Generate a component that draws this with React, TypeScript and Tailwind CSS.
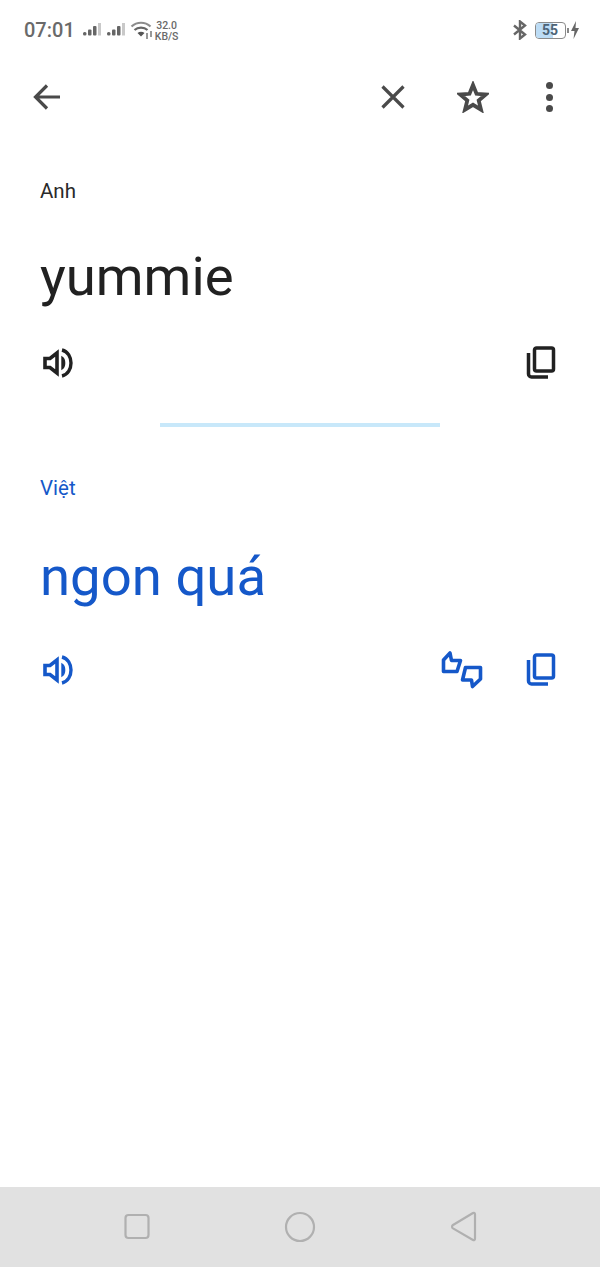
import React from "react";

const font = { fontFamily: 'Roboto, sans-serif' };

const SignalIcon = () => (
  <svg width="20" height="16" viewBox="0 0 20 16">
    <rect x="1" y="10" width="3.500" height="3.500" rx="1.500" fill="#666" />
    <rect x="6" y="7.500" width="3.500" height="6" rx="1" fill="#666" />
    <rect x="11" y="4" width="3.500" height="9.500" rx="1" fill="#666" />
    <rect x="16" y="1" width="3" height="12.500" fill="#c9c9c9" />
  </svg>
);

const WifiIcon = () => (
  <svg width="24" height="20" viewBox="0 0 24 20" fill="none">
    <path d="M1.500 6.500C7 1.500 15 1.500 20.500 6.500" stroke="#8c8c8c" strokeWidth="2.200" />
    <path d="M4.500 10C8 6.800 14 6.800 17.500 10" stroke="#666" strokeWidth="2.200" />
    <path d="M7.500 13C9.500 11.400 12.500 11.400 14.500 13L11 16.500Z" fill="#555" />
    <path d="M17 13v6M21 11v6" stroke="#777" strokeWidth="1.500" />
  </svg>
);

const SpeakerIcon = ({ color }: { color: string }) => (
  <svg width="36" height="32" viewBox="0 0 36 32" fill="none" stroke={color}>
    <path d="M5 11.500H10L17 6V26L10 20.500H5Z" strokeWidth="3.600" />
    <path d="M22 10c3.500 2 3.500 10 0 12Z" fill={color} strokeWidth="1.400" />
    <path d="M22 3c12 3 12 23 0 26" strokeWidth="3.400" />
  </svg>
);

const CopyIcon = ({ color }: { color: string }) => (
  <svg width="30" height="34" viewBox="0 0 30 34" fill="none" stroke={color} strokeWidth="3.500">
    <rect x="8.500" y="2" width="19" height="23" rx="2" />
    <path d="M2.500 7v21a3 3 0 0 0 3 3H22" />
  </svg>
);

const ThumbsIcon = () => (
  <svg width="42" height="40" viewBox="0 0 42 40" fill="none" stroke="#1558c9" strokeWidth="3.600" strokeLinejoin="round">
    <path d="M2.500 10L9 3L10.500 10.500H19.500L16 21.500H2.500Z" />
    <path d="M24.500 17.500H39.500V29L31.500 36.500L30.500 30H21.500Z" />
  </svg>
);

export default function App() {
  return (
    <div className="w-[600px] h-[1267px] flex flex-col bg-white overflow-hidden" style={font}>
      <div className="h-[60px] flex items-center justify-between pl-[24px] pr-[21px] shrink-0">
        <div className="flex items-center">
          <span className="text-[20px] leading-none font-medium text-[#6a6a6a]">07:01</span>
          <div className="ml-[7px]"><SignalIcon /></div>
          <div className="ml-[4px]"><SignalIcon /></div>
          <div className="ml-[4px] mt-[-1px]"><WifiIcon /></div>
          <div className="ml-[1px] mt-[2px] flex flex-col text-[10.500px] leading-[11px] font-medium text-[#6a6a6a] text-center">
            <span>32.0</span>
            <span>KB/S</span>
          </div>
        </div>
        <div className="flex items-center gap-[7px]">
          <svg width="16" height="20" viewBox="0 0 16 20" fill="none" stroke="#666" strokeWidth="2.400">
            <path d="M2 5.500L13 14.500L8 18.500V1.500L13 5.500L2 14.500" />
          </svg>
          <div className="flex items-center gap-[1px]">
            <div className="w-[31px] h-[17px] rounded-[4px] border border-[#8a8a8a] overflow-hidden flex">
              <div className="w-[17px] bg-[#bcdcf5] shrink-0" />
              <span className="ml-[-11px] text-[14px] leading-[15px] font-bold text-[#4d6478]">55</span>
            </div>
            <div className="w-[2px] h-[5px] bg-[#888]" />
            <svg width="8" height="18" viewBox="0 0 8 18" className="ml-[1px]">
              <path d="M5 0L0 10H3.500L2.500 18L8 7H4.500Z" fill="#666" />
            </svg>
          </div>
        </div>
      </div>

      <div className="h-[74px] flex items-center justify-between pl-[32px] pr-[47px] shrink-0">
        <svg width="30" height="28" viewBox="0 0 30 28" fill="none" stroke="#4a4a4a" strokeWidth="3.200">
          <path d="M28 14H4M15 2.500L3.500 14L15 25.500" />
        </svg>
        <div className="flex items-center">
          <svg width="26" height="26" viewBox="0 0 26 26" fill="none" stroke="#4a4a4a" strokeWidth="3.200">
            <path d="M2.500 2.500L23.500 23.500M23.500 2.500L2.500 23.500" />
          </svg>
          <svg width="32" height="32" viewBox="0 0 32 32" fill="none" stroke="#4a4a4a" strokeWidth="3.800" className="ml-[51px]">
            <path d="M16 4l3.500 8.800 9.300.700-7.100 6 2.300 9.200L16 23.800l-8 4.900 2.300-9.200-7.100-6 9.300-.700Z" />
          </svg>
          <div className="ml-[57px] flex flex-col gap-[4.500px]">
            <div className="w-[7px] h-[7px] rounded-full bg-[#4a4a4a]" />
            <div className="w-[7px] h-[7px] rounded-full bg-[#4a4a4a]" />
            <div className="w-[7px] h-[7px] rounded-full bg-[#4a4a4a]" />
          </div>
        </div>
      </div>

      <div className="flex flex-col flex-1 pl-[40px] pr-[44px]">
        <div className="mt-[43px] text-[20.500px] leading-[28px] text-[#2a2a2a]">Anh</div>
        <div className="mt-[39px] text-[54.500px] leading-[64px] text-[#212121]">yummie</div>
        <div className="mt-[38px] flex items-center justify-between">
          <SpeakerIcon color="#212121" />
          <CopyIcon color="#212121" />
        </div>
        <div className="mt-[43px] ml-[120px] w-[280px] h-[4px] bg-[#c8e8fa]" />
        <div className="mt-[47px] text-[20.500px] leading-[28px] text-[#1558c9]">Việt</div>
        <div className="mt-[42px] text-[54.500px] leading-[64px] text-[#1558c9]">ngon quá</div>
        <div className="mt-[42px] flex items-center justify-between">
          <SpeakerIcon color="#1558c9" />
          <div className="flex items-center gap-[43px]">
            <ThumbsIcon />
            <CopyIcon color="#1558c9" />
          </div>
        </div>
      </div>

      <div className="h-[80px] bg-[#e1e1e1] shrink-0 flex items-center justify-center">
        <svg width="400" height="44" viewBox="0 0 400 44" fill="none" stroke="#b0b0b0" strokeWidth="2.200">
          <rect x="25.500" y="10" width="23" height="23" rx="3" />
          <circle cx="200" cy="22" r="14" />
          <path d="M373 8L353 20a2 2 0 0 0 0 3.400L373 35c1 .5 2 0 2-1.500V9.500c0-1.500-1-2-2-1.500Z" strokeLinejoin="round" />
        </svg>
      </div>
    </div>
  );
}
